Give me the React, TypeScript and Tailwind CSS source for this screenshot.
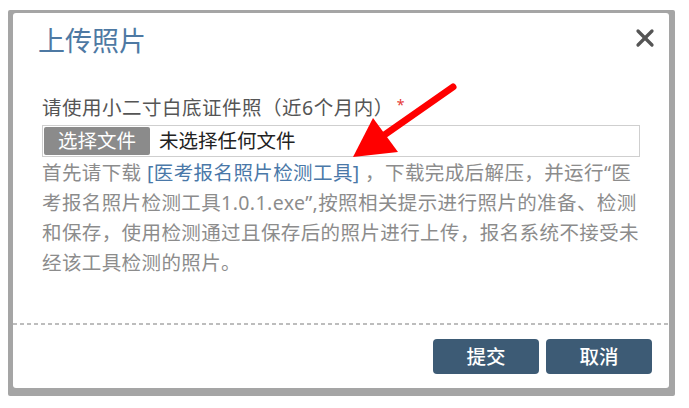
import { X } from 'lucide-react';

const font = "font-['Noto_Sans','Noto_Sans_CJK_SC',sans-serif]";

function Arrow() {
  return (
    <svg
      className="absolute inset-0 pointer-events-none"
      width={689}
      height={408}
      viewBox="0 0 689 408"
    >
      <line x1={453} y1={87} x2={380} y2={138} stroke="#ff0000" strokeWidth={7} strokeLinecap="round" />
      <polygon points="353,157 373,118 398,152" fill="#ff0000" />
    </svg>
  );
}

function App() {
  return (
    <div className={`relative w-[689px] h-[408px] bg-white pt-[10px] pl-[8px] ${font}`}>
      <div className="w-[667px] h-[386px] bg-[#a5a5a5] pt-[3px] pl-[5px] pr-[6px] pb-[8px] flex rounded-[2px]">
        <div className="flex-1 bg-white rounded-[3px] flex flex-col">
          {/* header */}
          <div className="flex justify-between items-start pl-[25px] pr-[10px] pt-[14px]">
            <h2 className="text-[27px] leading-[27px] text-[#4e79a3]">上传照片</h2>
            <X className="mt-[-3px] w-[28px] h-[28px] text-[#555]" strokeWidth={2.8} />
          </div>

          {/* body */}
          <div className="px-[29px] mt-[44px]">
            <div className="text-[19.5px] leading-[20px] text-[#555] tracking-[0.5px] flex items-start">
              请使用小二寸白底证件照（近6个月内）
              <span className="text-[#e53935] text-[14px] leading-[14px] ml-[3px]">*</span>
            </div>
            <div className="mt-[7px] h-[32px] border border-[#cfcfcf] p-[1px] flex items-center gap-[9px]">
              <span className="h-full w-[106px] bg-[#8b8b8b] rounded-[2px] text-white text-[19.5px] flex items-center justify-center">
                选择文件
              </span>
              <span className="text-[19.5px] text-[#222]">未选择任何文件</span>
            </div>
            <p className="mt-[1px] text-[19.5px] leading-[30px] text-[#8c8c8c] tracking-[0.4px]">
              首先请下载 <span className="text-[#4a78a8]">[医考报名照片检测工具]</span> ，下载完成后解压，并运行“医
              <br />
              考报名照片检测工具1.0.1.exe”,按照相关提示进行照片的准备、检测
              <br />
              和保存，使用检测通过且保存后的照片进行上传，报名系统不接受未
              <br />
              经该工具检测的照片。
            </p>
          </div>

          {/* divider */}
          <div className="mt-[45px] h-[2px] bg-[repeating-linear-gradient(90deg,#bdbdbd_0_4px,transparent_4px_7px)]" />

          {/* footer */}
          <div className="flex justify-end gap-[7px] pt-[14px] pr-[17px]">
            <button className="w-[106px] h-[35px] rounded-[4px] bg-[#3d5b75] text-white text-[19.5px] font-medium">
              提交
            </button>
            <button className="w-[106px] h-[35px] rounded-[4px] bg-[#3d5b75] text-white text-[19.5px] font-medium">
              取消
            </button>
          </div>
        </div>
      </div>
      <Arrow />
    </div>
  );
}

export default App;
